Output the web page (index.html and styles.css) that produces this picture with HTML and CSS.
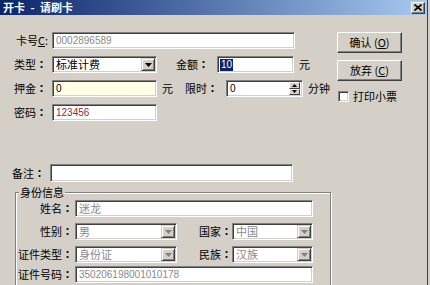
FILE: index.html
```html
<!DOCTYPE html>
<html>
<head>
<meta charset="utf-8">
<link rel="stylesheet" href="styles.css">
</head>
<body>
<div class="window">
  <div class="titlebar">
    <span class="title">开卡 - 请刷卡</span>
    <span class="close"><svg width="8" height="7" viewBox="0 0 8 7"><path d="M0.5 0.5L7.5 6.5M7.5 0.5L0.5 6.5" stroke="#000" stroke-width="1.7"/></svg></span>
  </div>
  <div class="body">
    <div class="top">
      <div class="form">
        <div class="row">
          <span class="lbl lbl-card">卡号<u>C</u>:</span>
          <div class="field w-card"><span class="num gray">0002896589</span></div>
        </div>
        <div class="row">
          <span class="lbl">类型<span class="c">：</span></span>
          <div class="field select w-short"><span>标准计费</span><span class="drop"><svg width="7" height="4" viewBox="0 0 7 4"><path d="M0 0H7L3.5 4Z" fill="#000"/></svg></span></div>
          <span class="lbl2">金额<span class="c">：</span></span>
          <div class="field w-amt"><span class="num hl">10</span></div>
          <span class="unit">元</span>
        </div>
        <div class="row">
          <span class="lbl">押金<span class="c">：</span></span>
          <div class="field w-short yellow"><span class="num">0</span></div>
          <span class="unit2">元</span>
          <span class="lbl3">限时<span class="c">：</span></span>
          <div class="field w-amt"><span class="num">0</span>
            <span class="spin">
              <span class="spinbtn"><svg width="5" height="3" viewBox="0 0 5 3"><path d="M0 3H5L2.5 0Z" fill="#000"/></svg></span>
              <span class="spinbtn"><svg width="5" height="3" viewBox="0 0 5 3"><path d="M0 0H5L2.5 3Z" fill="#000"/></svg></span>
            </span>
          </div>
          <span class="unit">分钟</span>
        </div>
        <div class="row">
          <span class="lbl">密码<span class="c">：</span></span>
          <div class="field w-short"><span class="num red">123456</span></div>
        </div>
      </div>
      <div class="side">
        <div class="btn">确认 (<u>O</u>)</div>
        <div class="btn">放弃 (<u>C</u>)</div>
        <div class="check"><span class="box"></span><span>打印小票</span></div>
      </div>
    </div>
    <div class="row note">
      <span class="lbl lbl-note">备注<span class="c">：</span></span>
      <div class="field w-note"></div>
    </div>
    <fieldset class="group">
      <legend>身份信息</legend>
      <div class="grow">
        <span class="glbl">姓名<span class="c">：</span></span>
        <div class="field w-name"><span class="gray">迷龙</span></div>
      </div>
      <div class="grow">
        <span class="glbl">性别<span class="c">：</span></span>
        <div class="field select w-sex"><span class="gray">男</span><span class="drop"><svg width="7" height="4" viewBox="0 0 7 4"><path d="M0 0H7L3.5 4Z" fill="#808080"/></svg></span></div>
        <span class="glbl2">国家<span class="c">：</span></span>
        <div class="field select w-cty"><span class="gray">中国</span><span class="drop"><svg width="7" height="4" viewBox="0 0 7 4"><path d="M0 0H7L3.5 4Z" fill="#808080"/></svg></span></div>
      </div>
      <div class="grow tight">
        <span class="glbl">证件类型<span class="c">：</span></span>
        <div class="field select w-sex"><span class="gray">身份证</span><span class="drop"><svg width="7" height="4" viewBox="0 0 7 4"><path d="M0 0H7L3.5 4Z" fill="#808080"/></svg></span></div>
        <span class="glbl2">民族<span class="c">：</span></span>
        <div class="field select w-cty"><span class="gray">汉族</span><span class="drop"><svg width="7" height="4" viewBox="0 0 7 4"><path d="M0 0H7L3.5 4Z" fill="#808080"/></svg></span></div>
      </div>
      <div class="grow">
        <span class="glbl">证件号码<span class="c">：</span></span>
        <div class="field w-name"><span class="num gray">350206198001010178</span></div>
      </div>
    </fieldset>
  </div>
</div>
</body>
</html>
```

FILE: styles.css
```css
html, body {
  margin: 0;
  padding: 0;
  background: #d4d0c8;
}
body {
  width: 430px;
  height: 285px;
  overflow: hidden;
  font-family: "Noto Sans CJK SC", "Liberation Sans", sans-serif;
  font-size: 11px;
  line-height: 13px;
  color: #000;
}
.c {
  font-family: "Noto Sans CJK JP", sans-serif;
  font-weight: bold;
}
.window {
  width: 427px;
  height: 300px;
  border-right: 1px solid #404040;
  background: #d4d0c8;
}
.titlebar {
  height: 15px;
  background: linear-gradient(to right, #0a246a, #a6caf0);
  display: flex;
  align-items: center;
  justify-content: space-between;
}
.title {
  color: #fff;
  font-weight: bold;
  font-size: 11px;
  padding-left: 3px;
  white-space: pre;
  word-spacing: 3px;
}
.close {
  box-sizing: border-box;
  width: 14px;
  height: 12px;
  margin-right: 2px;
  background: #d4d0c8;
  border: 1px solid;
  border-color: #fff #404040 #404040 #fff;
  box-shadow: inset -1px -1px 0 #808080;
  display: flex;
  align-items: center;
  justify-content: center;
}
.body {
  padding-top: 17px;
}
.top {
  display: flex;
}
.form {
  width: 336px;
}
.row {
  display: flex;
  align-items: center;
  height: 17px;
  margin-bottom: 7px;
}
.lbl {
  width: 47px;
  margin-right: 5px;
  text-align: right;
  white-space: nowrap;
}
.lbl-card {
  width: 48px;
  margin-right: 4px;
}
.lbl2, .lbl3 {
  width: 52px;
  margin-right: 8px;
  text-align: right;
  white-space: nowrap;
}
.lbl3 {
  width: 44px;
}
.unit {
  margin-left: 5px;
}
.unit2 {
  margin-left: 5px;
  width: 12px;
}
.field {
  box-sizing: border-box;
  height: 17px;
  background: #fff;
  border: 1px solid;
  border-color: #808080 #fff #fff #808080;
  box-shadow: inset 1px 1px 0 #404040, inset -1px -1px 0 #d4d0c8;
  padding: 0 2px 0 3px;
  display: flex;
  align-items: center;
  white-space: nowrap;
  overflow: hidden;
}
.w-card { width: 243px; }
.w-short { width: 105px; }
.w-amt { width: 77px; }
.w-note { width: 243px; height: 18px; }
.w-name { width: 238px; }
.w-sex { width: 102px; }
.w-cty { width: 81px; }
.yellow { background: #ffffe6; }
.num {
  font-family: "Liberation Sans", sans-serif;
  font-size: 10px;
}
.gray { color: #8a8a8a; }
.red { color: #9a2a35; }
.hl {
  background: #0a246a;
  color: #fff;
  padding: 0 1px;
  margin-left: -1px;
  line-height: 12px;
}
.select .drop {
  margin-left: auto;
  margin-right: -1px;
  box-sizing: border-box;
  width: 14px;
  height: 13px;
  background: #d4d0c8;
  border: 1px solid;
  border-color: #d4d0c8 #404040 #404040 #d4d0c8;
  box-shadow: inset 1px 1px 0 #fff, inset -1px -1px 0 #808080;
  display: flex;
  align-items: center;
  justify-content: center;
}
.select > span:first-child {
  flex: none;
}
.spin {
  margin-left: auto;
  display: flex;
  flex-direction: column;
  width: 11px;
  height: 13px;
}
.spinbtn {
  box-sizing: border-box;
  flex: 1;
  background: #d4d0c8;
  border: 1px solid;
  border-color: #fff #404040 #404040 #fff;
  display: flex;
  align-items: center;
  justify-content: center;
}
.side {
  display: flex;
  flex-direction: column;
  padding-left: 1px;
}
.btn {
  box-sizing: border-box;
  width: 65px;
  height: 21px;
  margin-bottom: 7px;
  border: 1px solid;
  border-color: #fff #404040 #404040 #fff;
  box-shadow: inset -1px -1px 0 #808080;
  display: flex;
  align-items: center;
  justify-content: center;
  white-space: pre;
}
.check {
  margin-top: 2px;
  padding-left: 1px;
  display: flex;
  align-items: center;
  gap: 4px;
}
.box {
  box-sizing: border-box;
  width: 11px;
  height: 11px;
  background: #fff;
  border: 1px solid;
  border-color: #808080 #fff #fff #808080;
  box-shadow: inset 1px 1px 0 #404040, inset -1px -1px 0 #d4d0c8;
}
.note {
  margin-top: 36px;
  margin-bottom: 4px;
  height: 18px;
}
.lbl-note {
  width: 45px;
}
.group {
  box-sizing: border-box;
  width: 316px;
  height: 120px;
  margin: 0 0 0 15px;
  padding: 2px 0 0 0;
  border: 1px solid #808080;
  box-shadow: 1px 1px 0 #fff, inset 1px 1px 0 #fff;
}
.group legend {
  padding: 0 1px;
  margin-left: 3px;
  line-height: 12px;
  background: #d4d0c8;
}
.grow {
  display: flex;
  align-items: center;
  height: 17px;
  margin-bottom: 6px;
}
.grow.tight {
  margin-bottom: 3px;
}
.glbl {
  width: 57px;
  margin-right: 2px;
  text-align: right;
  white-space: nowrap;
}
.glbl2 {
  width: 55px;
  text-align: right;
  white-space: nowrap;
}
```
